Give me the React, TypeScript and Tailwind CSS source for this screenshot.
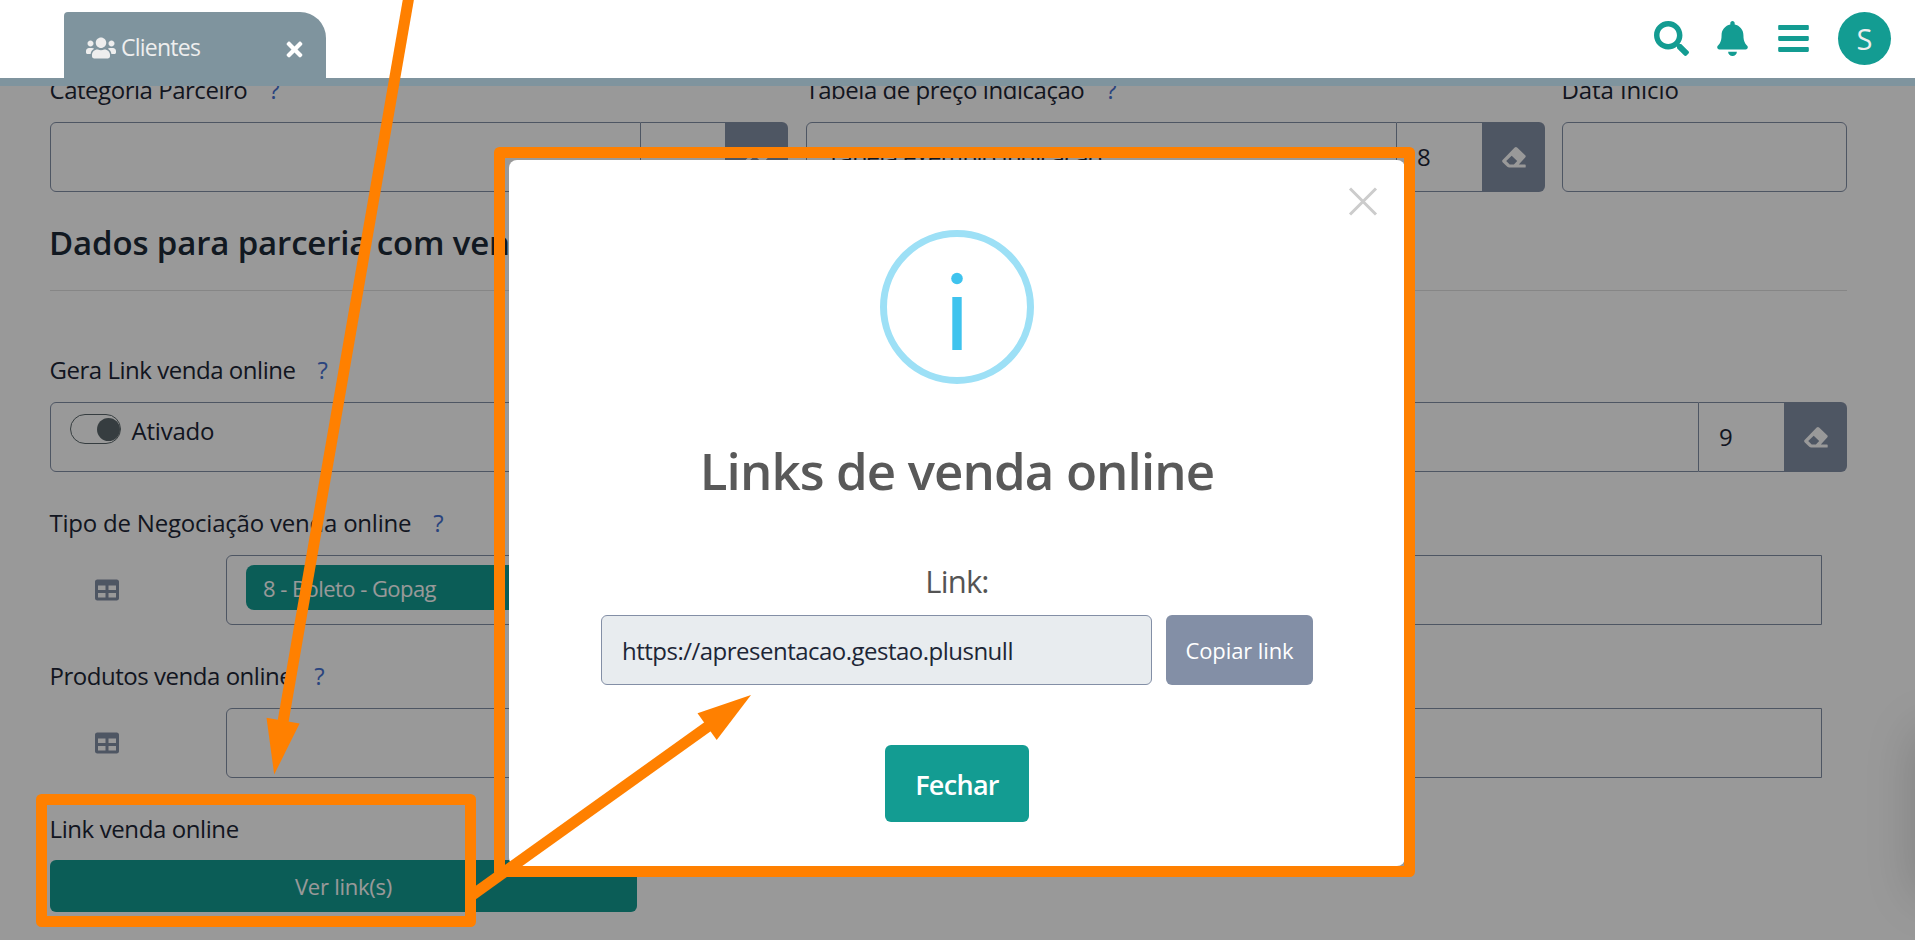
import React from "react";
import { FaSearch, FaBell, FaBars, FaUsers, FaTimes, FaTable } from "react-icons/fa";

function EraserIcon() {
  return (
    <svg className="h-[21px] w-6" viewBox="0 0 24 21" fill="currentColor" fillRule="evenodd">
      <path d="M12.7 0.6 Q13.9 -0.5 15.1 0.6 L23.2 8.2 Q24.3 9.3 23.2 10.4 L16.8 17.5 H23 Q23.7 17.5 23.7 18.2 V19.9 Q23.7 20.6 23 20.6 H7.2 Q6.1 20.6 5.3 19.8 L0.6 15.2 Q-0.4 14.1 0.6 13 Z M9.7 8.7 L4.2 14 L7.7 17.5 H11.9 L15.2 14 Z" />
    </svg>
  );
}

function Label({ text, className = "tracking-[-0.47px]", help = false }: { text: string; className?: string; help?: boolean }) {
  return (
    <div className="-ml-[0.5px] flex h-9 items-center text-[24px] leading-9 whitespace-nowrap text-[#1d2636]">
      <span className={className}>{text}</span>
      {help && <span className="ml-[22px] text-[#4672d3]">?</span>}
    </div>
  );
}

function Lookup({ text = "", code = "", className = "", codeWidth = "w-[85px]" }: { text?: string; code?: string; className?: string; codeWidth?: string }) {
  return (
    <div className={`flex h-[70px] text-[24px] text-[#1d2636] ${className}`}>
      <div className="flex flex-1 items-center rounded-l-[6px] border border-[#838fa6] pl-5 tracking-[-0.6px]">{text}</div>
      <div className={`flex items-center border-y border-[#838fa6] pl-5 ${codeWidth}`}>{code}</div>
      <div className="flex w-[63px] items-center justify-center rounded-r-[6px] bg-[#838fa6] pt-px text-white">
        <EraserIcon />
      </div>
    </div>
  );
}

function MultiSelect({ children }: { children?: React.ReactNode }) {
  return (
    <div className="flex h-[70px] items-center">
      <div className="flex w-[176px] pl-[45px] text-[#838fa6]">
        <FaTable className="size-6" />
      </div>
      <div className="flex h-full w-[1596px] items-start rounded-l-[6px] border border-[#838fa6] pt-[9px] pl-[19px]">{children}</div>
    </div>
  );
}

export default function App() {
  return (
    <div className="relative flex h-[942px] w-[1915px] flex-col overflow-hidden bg-white font-['Open_Sans','Noto_Sans',sans-serif]">
      <header className="flex h-[86px] shrink-0 items-start justify-between border-b-8 border-[#7f949e] pt-3 pr-6 pl-16">
        <div className="flex h-[66px] w-[262px] items-center rounded-tl-[4px] rounded-tr-[26px] bg-[#7f949e] pt-[5px] pr-[20px] pl-[22px] text-[#eeeeee]">
          <FaUsers className="size-[30px]" />
          <span className="ml-[5px] text-[23px] tracking-[-0.75px]">Clientes</span>
          <FaTimes className="mt-1 ml-auto size-[23px] text-white" />
        </div>
        <div className="flex items-center text-[#139c92]">
          <FaSearch className="size-[35px]" />
          <FaBell className="ml-[26px] size-[35px]" />
          <FaBars className="ml-[26px] size-[35px]" />
          <div className="ml-[27px] flex size-[53px] items-center justify-center rounded-full bg-[#139c92] pt-px text-[29px] text-[#eeeeee]">S</div>
        </div>
      </header>

      <main className="relative h-[854px] w-full shrink-0 overflow-hidden px-[50px]">
        <div className="-mt-[14px] grid w-[1797px] grid-cols-[738px_738px_285px] gap-x-[18px]">
          <Label text="Categoria Parceiro" help />
          <Label text="Tabela de preço indicação" help />
          <Label text="Data Início" className="tracking-[-0.1px]" />
        </div>
        <div className="mt-[14px] flex w-[1797px]">
          <Lookup className="w-[738px]" codeWidth="w-[84px]" />
          <Lookup text="Tabela exemplo indicação" code="8" className="ml-[18px] w-[739px]" />
          <div className="ml-[17px] h-[70px] w-[285px] rounded-[6px] border border-[#838fa6]" />
        </div>
        <h2 className="mt-[27px] -ml-px h-12 text-[33px] leading-[48px] font-semibold tracking-[-0.15px] whitespace-nowrap text-[#1d2a38]">
          Dados para parceria com venda online
        </h2>
        <div className="mt-[23px] w-[1797px] border-t border-[#dfdfdf]" />

        <div className="mt-[61px]">
          <Label text="Gera Link venda online" help />
        </div>
        <div className="mt-[14px] flex w-[1797px] gap-[18px]">
          <div className="flex h-[70px] w-[588px] items-start rounded-[6px] border border-[#838fa6] pt-[11px] pl-[19px]">
            <div className="flex h-[30px] w-[51px] items-center justify-end rounded-full border border-[#5b676b]">
              <div className="size-[23px] rounded-full bg-[#5b676b]" />
            </div>
            <span className="-mt-px ml-[10.5px] text-[24px] leading-9 tracking-[-0.2px] text-[#1d2636]">Ativado</span>
          </div>
          <Lookup code="9" className="flex-1" />
        </div>

        <div className="mt-[33px]">
          <Label text="Tipo de Negociação venda online" className="tracking-[-0.21px]" help />
        </div>
        <div className="mt-[14px]">
          <MultiSelect>
            <div className="flex h-[45px] w-[500px] items-center rounded-[8px] bg-[#139c92] pt-px pl-[17px] text-[22px] tracking-[-0.55px] text-white">8 - Boleto - Gopag</div>
          </MultiSelect>
        </div>

        <div className="mt-[33px]">
          <Label text="Produtos venda online" help />
        </div>
        <div className="mt-[14px]">
          <MultiSelect />
        </div>

        <div className="mt-[33px]">
          <Label text="Link venda online" className="tracking-[-0.4px]" />
        </div>
        <button className="mt-[13px] flex h-[52px] w-[587px] items-center justify-center rounded-[6px] bg-[#139c92] text-[22px] tracking-[-0.25px] text-white">Ver link(s)</button>

        <div className="absolute top-[645px] -right-[60px] h-[165px] w-[60px] rounded-[10px] shadow-[0_0_50px_rgba(0,0,0,0.17)]" />
        <div className="absolute inset-0 bg-black/40" />
      </main>

      <section className="absolute top-[160px] left-[509px] flex h-[706px] w-[896px] flex-col items-center rounded-[8px] bg-white text-[#545454]">
        <svg className="absolute top-[27px] right-[27px] size-[30px]" viewBox="0 0 30 30" fill="none" stroke="#cccccc" strokeWidth="3">
          <path d="M2 1.5 L28 27.5 M28 1.5 L2 27.5" />
        </svg>
        <svg className="mt-[70px] size-[154px] shrink-0" viewBox="0 0 154 154">
          <circle cx="77" cy="77" r="73.5" fill="none" stroke="#9de0f6" strokeWidth="7" />
          <circle cx="77" cy="48.5" r="5.8" fill="#3fc3ee" />
          <rect x="72.3" y="67" width="9.4" height="53" fill="#3fc3ee" />
        </svg>
        <h1 className="mt-[50px] h-[72px] text-[51px] leading-[72px] font-semibold tracking-[-0.9px] whitespace-nowrap text-[#595959]">Links de venda online</h1>
        <div className="mt-[53px] h-[44px] text-[31px] leading-[44px] tracking-[-0.8px]">Link:</div>
        <div className="mt-[12px] flex h-[70px] gap-[14px]">
          <div className="flex w-[551px] items-center rounded-[6px] border border-[#838fa6] bg-[#e8ecef] pt-[2px] pl-[20px] text-[24px] tracking-[-0.51px] text-[#1d2636]">
            https://apresentacao.gestao.plusnull
          </div>
          <button className="flex w-[147px] items-center justify-center rounded-[6px] bg-[#838fa6] text-[22px] tracking-[-0.1px] whitespace-nowrap text-white">Copiar link</button>
        </div>
        <button className="mt-[60px] flex h-[77px] w-[144px] items-center justify-center rounded-[6px] bg-[#139c92] pt-[3px] text-[27px] font-semibold tracking-[-0.7px] text-white">Fechar</button>
      </section>

      <svg className="absolute inset-0 h-[942px] w-[1915px]" viewBox="0 0 1915 942" fill="none" stroke="#ff8000" strokeWidth="11">
        <rect x="499.5" y="152.5" width="910" height="719" strokeLinejoin="round" />
        <rect x="41.5" y="799.5" width="429" height="122" strokeLinejoin="round" />
        <path d="M409 -4 L283 722" />
        <path d="M471 896 L710 725" />
        <path d="M266.5 717.7 L299.6 723.5 L274.2 774.5 Z" fill="#ff8000" stroke="none" />
        <path d="M697.5 713.3 L716.7 740 L751 695 Z" fill="#ff8000" stroke="none" />
      </svg>
    </div>
  );
}
